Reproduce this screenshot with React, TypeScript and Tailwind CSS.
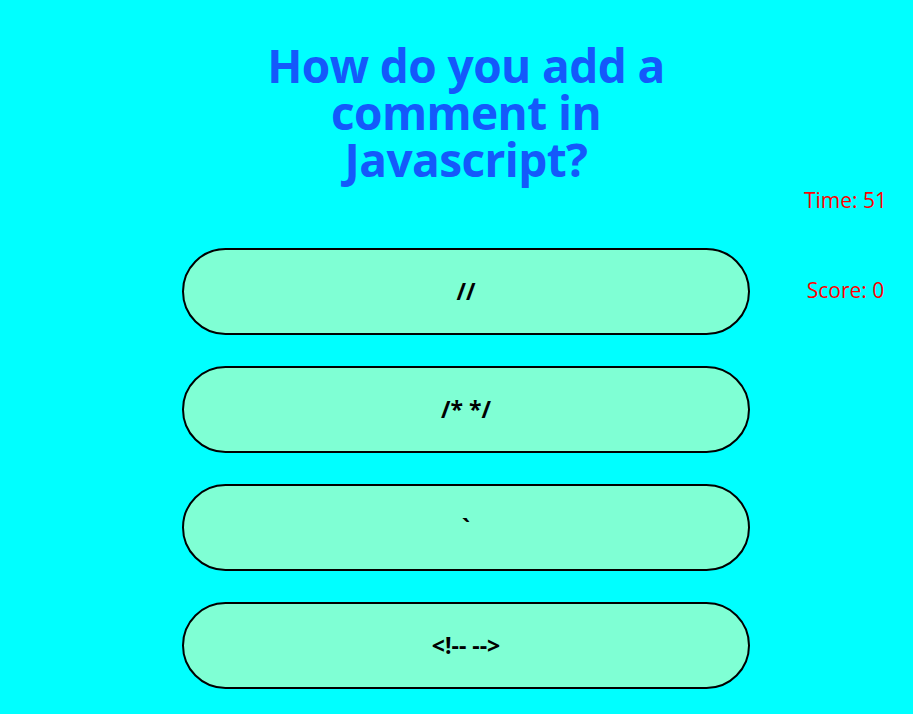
import React from "react";

const options = ["//", "/* */", "`", "<!-- -->"];

export default function App() {
  return (
    <div
      className="min-h-screen w-full bg-[#00ffff] flex"
      style={{ fontFamily: '"Open Sans", "Noto Sans", sans-serif' }}
    >
      <div className="w-[182px] shrink-0" />
      <main className="w-[568px] shrink-0 flex flex-col items-center">
        <h1 className="mt-[42px] w-[440px] text-center text-[46px] leading-[47px] font-bold text-[#1459fb] tracking-[-0.6px]">
          How do you add a comment in Javascript?
        </h1>
        <div className="mt-[65px] w-full flex flex-col gap-[31px]">
          {options.map((o) => (
            <button
              key={o}
              className="h-[87px] w-[568px] rounded-full border-2 border-black bg-[#7fffd4] text-black font-bold text-[23px]"
            >
              {o}
            </button>
          ))}
        </div>
      </main>
      <aside className="flex-1 flex flex-col items-center pl-[28px] pt-[186px] text-[21px] text-[#ff0000]">
        <div className="leading-[28px]">Time: 51</div>
        <div className="mt-[62px] leading-[28px]">Score: 0</div>
      </aside>
    </div>
  );
}
